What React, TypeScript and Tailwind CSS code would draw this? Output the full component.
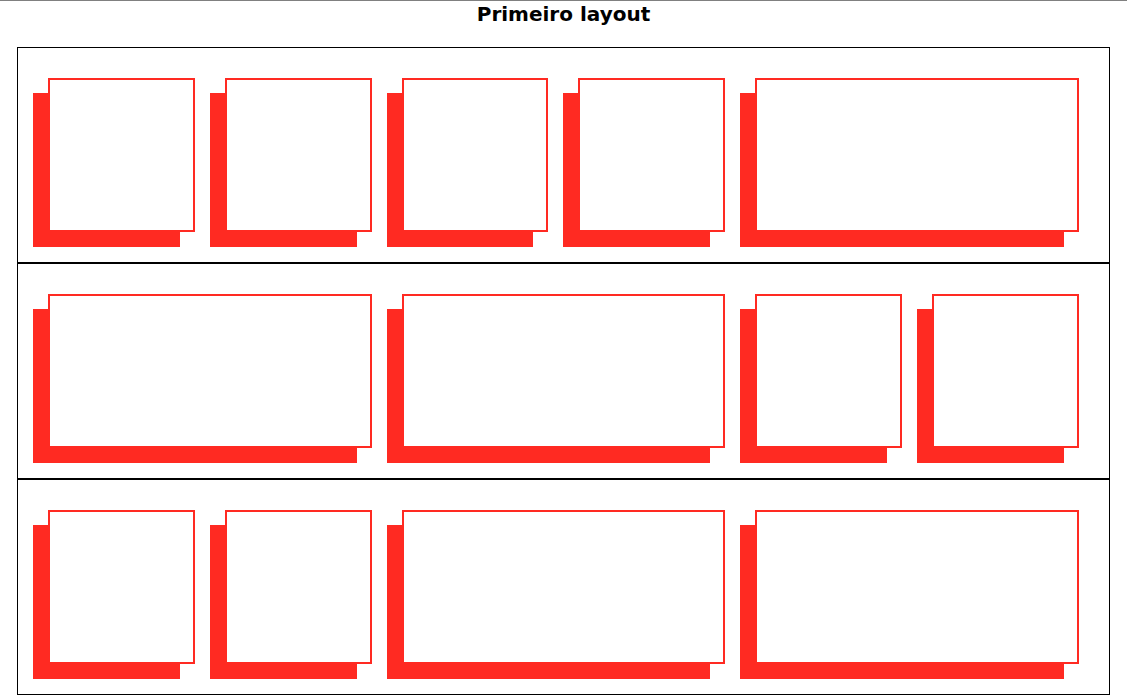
const rows: number[][] = [
  [1, 1, 1, 1, 2],
  [2, 2, 1, 1],
  [1, 1, 2, 2],
];

function Card({ span }: { span: number }) {
  return (
    <div
      className={
        "h-[154px] bg-white border-2 border-[#ff2a22] shadow-[-15px_15px_0_#ff2a22] " +
        (span === 2 ? "col-span-2" : "col-span-1")
      }
    />
  );
}

export default function App() {
  return (
    <div className="min-h-[697px] bg-white border-t border-[#808080] font-['DejaVu_Sans',sans-serif]">
      <h1 className="pt-[1px] text-center text-[20px] leading-[24px] font-bold text-black">
        Primeiro layout
      </h1>

      <div className="mx-[17px] mt-[21px] border border-black">
        {rows.map((row, i) => (
          <div
            key={i}
            className={
              "grid grid-cols-6 gap-[30px] px-[30px] py-[30px] border-black " +
              (i > 0 ? "border-t-2" : "")
            }
          >
            {row.map((span, j) => (
              <Card key={j} span={span} />
            ))}
          </div>
        ))}
      </div>
    </div>
  );
}
